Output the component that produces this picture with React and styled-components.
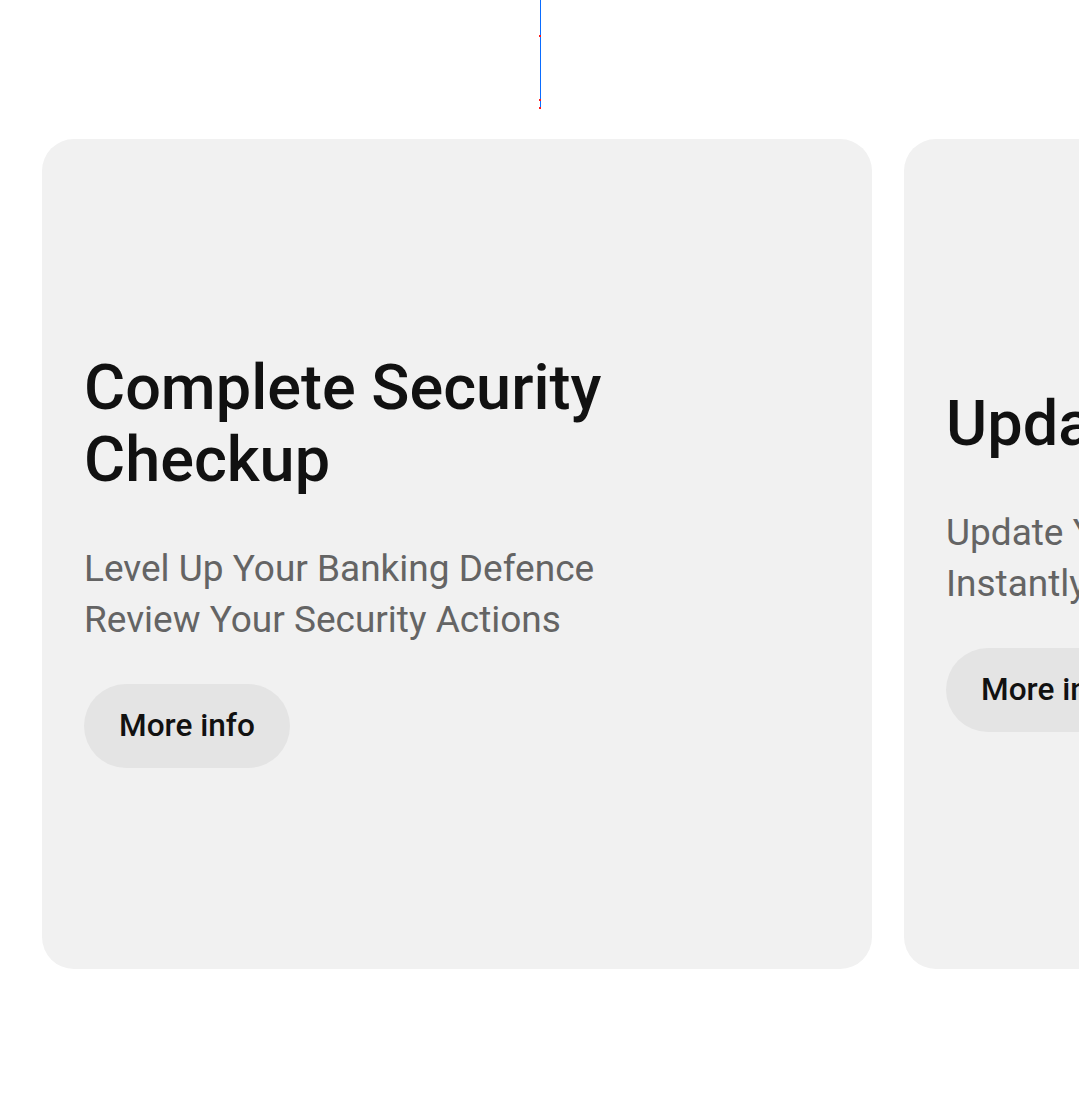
import styled, { createGlobalStyle } from "styled-components";

const GlobalStyle = createGlobalStyle`
  html, body {
    margin: 0;
    padding: 0;
    background: #ffffff;
    overflow: hidden;
  }
  body {
    font-family: Roboto, "Liberation Sans", Arial, sans-serif;
  }
`;

const cards = [
  {
    id: "security",
    title: "Complete Security Checkup",
    text: "Level Up Your Banking Defence Review Your Security Actions",
  },
  {
    id: "details",
    title: "Update Your Details",
    text: "Update Your Personal Details Instantly",
  },
];

const App = () => {
  return (
    <Page>
      <GlobalStyle />
      <Guide>
        <Dot $top={35} />
        <Dot $top={99} />
        <Dot $top={107} />
      </Guide>
      <Track>
        {cards.map((card) => (
          <Card key={card.id}>
            <Title>{card.title}</Title>
            <Text>{card.text}</Text>
            <MoreButton>More info</MoreButton>
          </Card>
        ))}
      </Track>
    </Page>
  );
};

const Page = styled.div`
  width: 100%;
  height: 1107px;
  overflow: hidden;
  display: flex;
  flex-direction: column;
`;

const Guide = styled.div`
  position: relative;
  align-self: center;
  width: 1px;
  height: 108px;
  margin-left: 1px;
  background: #0a6cff;
`;

const Dot = styled.span`
  position: absolute;
  left: -0.5px;
  top: ${(p) => p.$top}px;
  width: 2px;
  height: 2px;
  background: #ff1a1a;
`;

const Track = styled.div`
  display: flex;
  gap: 32px;
  padding: 31px 42px 0;
`;

const Card = styled.div`
  flex: 0 0 830px;
  height: 830px;
  box-sizing: border-box;
  padding: 11px 42px 0;
  border-radius: 32px;
  background: #f1f1f1;
  display: flex;
  flex-direction: column;
  justify-content: center;
  align-items: flex-start;
`;

const Title = styled.h2`
  margin: 0;
  max-width: 640px;
  font-size: 63px;
  line-height: 72px;
  font-weight: 500;
  color: #111111;
`;

const Text = styled.p`
  margin: 47px 0 0;
  max-width: 560px;
  font-size: 37px;
  line-height: 51px;
  font-weight: 400;
  color: #646464;
`;

const MoreButton = styled.button`
  margin-top: 39px;
  height: 84px;
  padding: 0 35px;
  border: none;
  border-radius: 42px;
  background: #e4e4e4;
  font-family: inherit;
  font-size: 31.6px;
  font-weight: 500;
  color: #111111;
  cursor: pointer;
`;

export default App;
